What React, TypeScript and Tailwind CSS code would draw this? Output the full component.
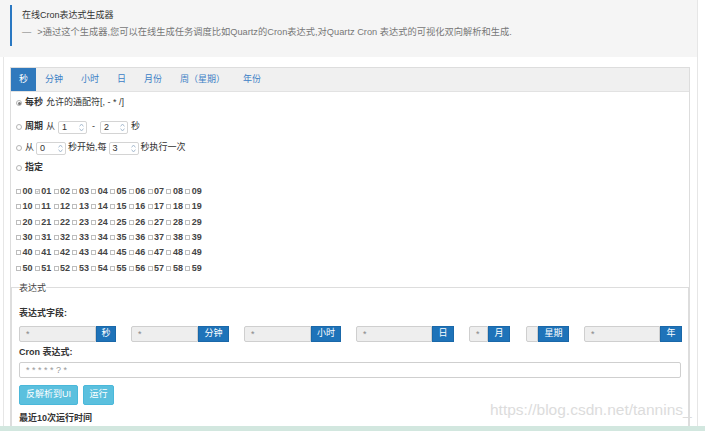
import React from "react";

const font = { fontFamily: '"Liberation Sans", "Noto Sans CJK SC", sans-serif' };

function Radio({ on }: { on?: boolean }) {
  return (
    <span className="w-[6px] h-[6px] rounded-full border border-[#b5b5b5] bg-white flex items-center justify-center shrink-0">
      {on && <span className="w-[3px] h-[3px] rounded-full bg-[#777]" />}
    </span>
  );
}

function Spin({ v, w }: { v: string; w: string }) {
  return (
    <span className={`inline-flex items-center h-[13px] border border-[#d4d4d4] rounded-[2px] bg-white ${w}`}>
      <span className="flex-1 pl-[3px] text-[9px] leading-none text-[#333]">{v}</span>
      <svg width="5" height="9" viewBox="0 0 5 9" className="mr-[2px]">
        <path d="M0.6 3.4 L2.5 1 L4.4 3.4 M0.6 5.6 L2.5 8 L4.4 5.6" fill="none" stroke="#9fb5cc" strokeWidth="0.9" />
      </svg>
    </span>
  );
}

function Check({ on }: { on?: boolean }) {
  return (
    <span className="w-[5px] h-[5px] border border-[#bdbdbd] bg-white flex items-center justify-center shrink-0">
      {on && (
        <svg width="5" height="5" viewBox="0 0 5 5">
          <path d="M0.8 2.6 L2 3.8 L4.4 1" fill="none" stroke="#555" strokeWidth="0.9" />
        </svg>
      )}
    </span>
  );
}

function Field({ val, addon, aw }: { val: string; addon: string; aw: string }) {
  return (
    <div className="flex h-[16px] min-w-0">
      <div className="flex-1 min-w-0 bg-[#eeeeee] border border-[#cfcfcf] rounded-l-[2px] pl-[6px] text-[9px] leading-[14px] text-[#888]">
        {val}
      </div>
      <div className={`${aw} shrink-0 bg-[#1e73b9] border border-[#1a68a9] flex items-center justify-center text-[9px] text-white`}>
        {addon}
      </div>
    </div>
  );
}

const tabs = ["分钟", "小时", "日", "月份", "周（星期）", "年份"];

export default function App() {
  return (
    <div className="relative w-[705px] h-[431px] overflow-hidden bg-white flex flex-col text-[#333]" style={font}>
      <div className="flex-1 overflow-hidden">
        {/* header box */}
        <div className="w-[698px] h-[57px] bg-[#f5f5f5] border-r border-[#e6e6e6] pt-[5px] pl-[10px]">
          <div className="border-l-[2.5px] border-[#2a78c2] h-[41px] pl-[10px] pt-[4px]">
            <div className="text-[9px] leading-[12px] text-[#333]">在线Cron表达式生成器</div>
            <div className="flex text-[9.25px] leading-[12px] text-[#777] mt-[5px]">
              <span className="mr-[6px]">—</span>
              <span>&gt;通过这个生成器,您可以在线生成任务调度比如Quartz的Cron表达式,对Quartz Cron 表达式的可视化双向解析和生成.</span>
            </div>
          </div>
        </div>

        {/* main wrapper */}
        <div className="ml-[3px] w-[695px] h-[400px] border-x border-[#e6e6e6] pt-[10px] pl-[6px]">
          <div className="w-[680px] h-[400px] border border-[#dddddd]">
            {/* tabs */}
            <div className="h-[24px] bg-[#f0f0f0] border-b border-[#e2e2e2] flex">
              <div className="px-[8px] bg-[#3079bd] text-white text-[9px] flex items-center">秒</div>
              {tabs.map((t) => (
                <div key={t} className="px-[9px] text-[9px] text-[#3c80c6] flex items-center">
                  {t}
                </div>
              ))}
            </div>

            {/* second options */}
            <div className="pl-[5px] text-[9px]">
              <div className="mt-[3px] h-[16px] flex items-center gap-[3px]">
                <Radio on />
                <span className="font-bold">每秒</span>
                <span>允许的通配符[, - * /]</span>
              </div>
              <div className="mt-[8px] h-[16px] flex items-center gap-[3px]">
                <Radio />
                <span className="font-bold">周期</span>
                <span>从</span>
                <Spin v="1" w="w-[29px]" />
                <span className="px-[2px]">-</span>
                <Spin v="2" w="w-[28px]" />
                <span>秒</span>
              </div>
              <div className="mt-[5px] h-[16px] flex items-center gap-[2px]">
                <Radio />
                <span className="ml-[1px]">从</span>
                <Spin v="0" w="w-[30px]" />
                <span>秒开始,每</span>
                <Spin v="3" w="w-[30px]" />
                <span>秒执行一次</span>
              </div>
              <div className="mt-[4px] h-[16px] flex items-center gap-[3px]">
                <Radio />
                <span className="font-bold">指定</span>
              </div>

              <div className="mt-[8px] grid grid-cols-[repeat(10,18.8px)]">
                {Array.from({ length: 60 }, (_, i) => (
                  <div key={i} className="h-[15.3px] flex items-center gap-[1.5px]">
                    <Check on={i === 1} />
                    <span className="text-[9px] font-bold text-[#444] leading-none">
                      {String(i).padStart(2, "0")}
                    </span>
                  </div>
                ))}
              </div>
            </div>

            {/* expression fieldset */}
            <fieldset className="mt-[5px] mr-[1px] border border-[#dddddd] px-[7px] h-[200px]">
              <legend className="text-[9px] leading-[14px] text-[#444]">表达式</legend>
              <div className="mt-[12px] h-[14px] flex items-center text-[9px] font-bold">表达式字段:</div>
              <div className="mt-[5px] grid grid-cols-[97px_98px_97px_98px_100px_98px] gap-x-[15px] w-[662px]">
                <Field val="*" addon="秒" aw="w-[20px]" />
                <Field val="*" addon="分钟" aw="w-[31px]" />
                <Field val="*" addon="小时" aw="w-[30px]" />
                <Field val="*" addon="日" aw="w-[22px]" />
                <div className="flex gap-[16px]">
                  <div className="w-[41px]">
                    <Field val="*" addon="月" aw="w-[22px]" />
                  </div>
                  <div className="w-[43px]">
                    <Field val="" addon="星期" aw="w-[31px]" />
                  </div>
                </div>
                <Field val="*" addon="年" aw="w-[22px]" />
              </div>
              <div className="mt-[4px] h-[14px] flex items-center text-[9px] font-bold">Cron 表达式:</div>
              <div className="mt-[2px] w-[662px] h-[16px] border border-[#cfcfcf] rounded-[2px] pl-[6px] text-[9px] leading-[14px] text-[#999]">
                * * * * * ? *
              </div>
              <div className="mt-[7px] flex gap-[5px]">
                <button className="h-[20px] px-[5px] w-[59px] bg-[#5bc0de] border border-[#4ab8da] rounded-[2px] text-white text-[9px]">
                  反解析到UI
                </button>
                <button className="h-[20px] w-[31px] bg-[#5bc0de] border border-[#4ab8da] rounded-[2px] text-white text-[9px]">
                  运行
                </button>
              </div>
              <div className="mt-[7px] h-[14px] flex items-center text-[9px] font-bold">最近10次运行时间</div>
            </fieldset>
          </div>
        </div>
      </div>
      <div className="h-[5px] bg-[#d2e7df] shrink-0" />

      {/* watermark */}
      <div className="absolute left-[490px] top-[401px] text-[15.5px] leading-[18px] text-[#dcdcdc]" style={{ fontFamily: '"Liberation Sans", sans-serif' }}>
        https://blog.csdn.net/tannins_
      </div>
    </div>
  );
}
